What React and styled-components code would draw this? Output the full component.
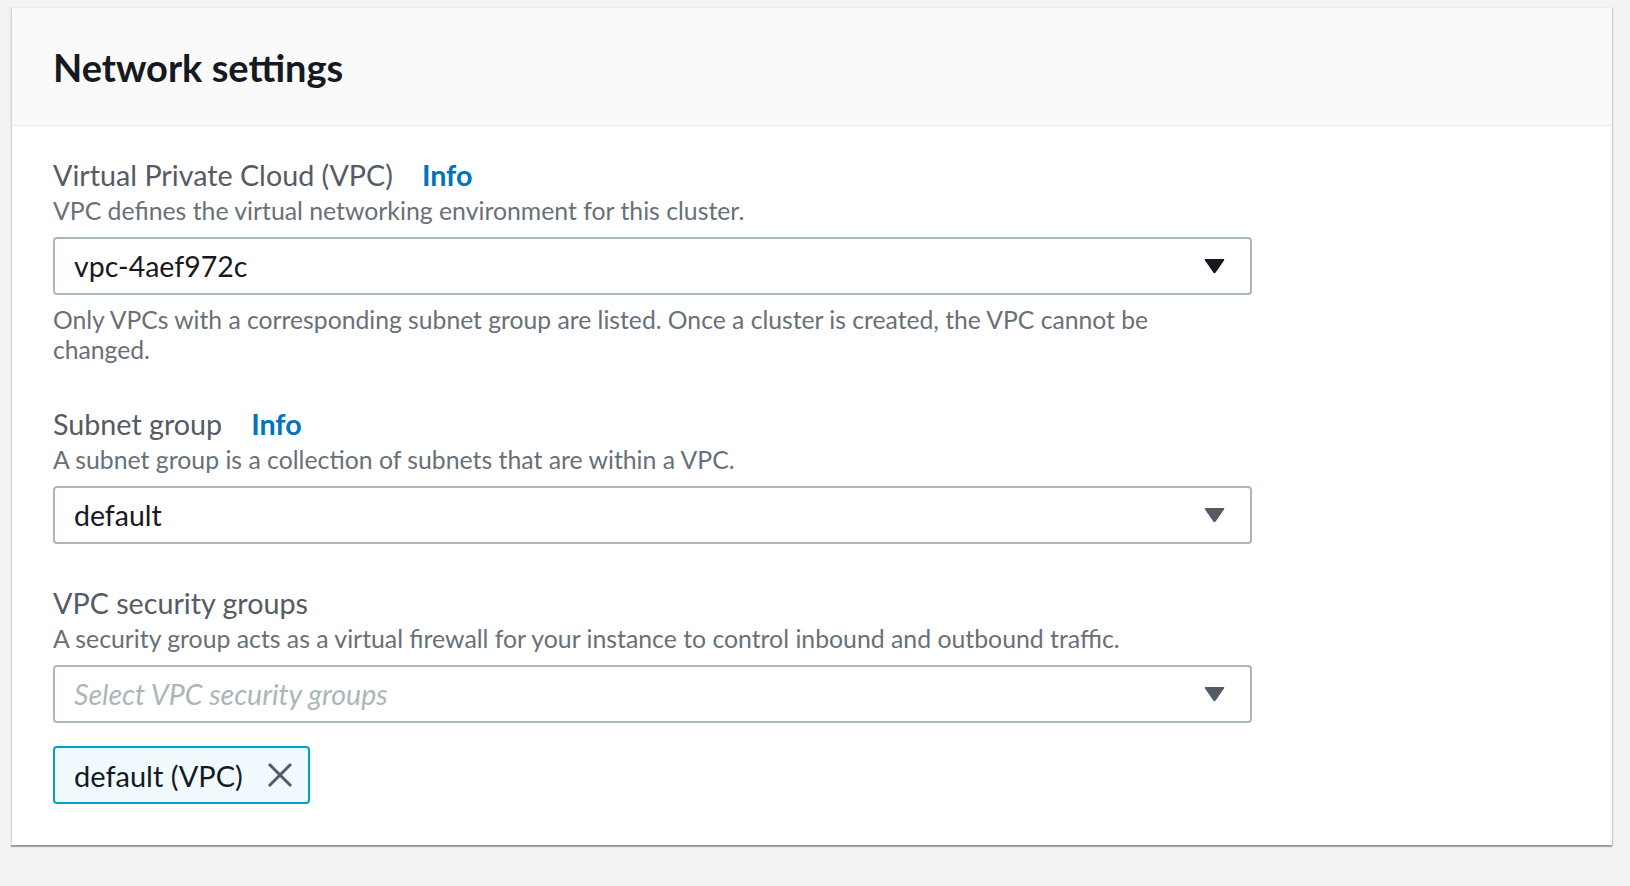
import React from "react";
import styled, { createGlobalStyle } from "styled-components";

const GlobalStyle = createGlobalStyle`
  html, body {
    margin: 0;
    padding: 0;
    background: #f2f3f3;
  }
  body {
    font-family: Lato, "Open Sans", "Noto Sans", sans-serif;
    color: #16191f;
  }
`;

const Page = styled.div`
  padding: 7px 18px 41px 11px;
  min-height: 886px;
  box-sizing: border-box;
`;

const Card = styled.section`
  background: #fff;
  border-top: 1px solid #eaeded;
  border-left: 1px solid #d5dbdb;
  box-shadow: 0 2px 1px 0 rgba(0, 28, 36, 0.3), 1px 1px 1px 0 rgba(0, 28, 36, 0.15);
`;

const Header = styled.header`
  height: 117px;
  background: #fafafa;
  border-bottom: 1px solid #eaeded;
  display: flex;
  align-items: center;
  padding: 0 41px;
`;

const Title = styled.h2`
  margin: 0;
  font-size: 38px;
  font-weight: 700;
  color: #16191f;
`;

const Body = styled.div`
  padding: 32px 41px 41px;
  display: flex;
  flex-direction: column;
  gap: 42px;
`;

const Field = styled.div`
  display: flex;
  flex-direction: column;
`;

const Label = styled.div`
  font-size: 28.7px;
  line-height: 35px;
  color: #545b64;
  display: flex;
  gap: 29px;
`;

const InfoLink = styled.a`
  color: #0073bb;
  font-weight: 700;
  text-decoration: none;
`;

const Description = styled.div`
  font-size: 24.8px;
  line-height: 35px;
  color: #687078;
`;

const Hint = styled.div`
  font-size: 24.7px;
  line-height: 30px;
  color: #687078;
  margin-top: 10px;
  max-width: 1120px;
`;

const Select = styled.div`
  margin-top: 9px;
  width: 1199px;
  height: 58px;
  box-sizing: border-box;
  border: 2px solid #aab7b8;
  border-radius: 4px;
  display: flex;
  align-items: center;
  justify-content: space-between;
  padding: 0 25px 0 19px;
  font-size: 28.5px;
  color: ${(p) => (p.$placeholder ? "#aab7b8" : "#16191f")};
  font-style: ${(p) => (p.$placeholder ? "italic" : "normal")};
`;

const Tokens = styled.div`
  display: flex;
  margin-top: 23px;
`;

const Token = styled.div`
  height: 58px;
  box-sizing: border-box;
  border: 2px solid #00a1c9;
  border-radius: 4px;
  background: #f1faff;
  display: flex;
  align-items: center;
  gap: 24px;
  padding: 0 15px 0 19px;
  font-size: 29px;
  color: #16191f;
`;

const Arrow = ({ color }) => (
  <svg width="21" height="16" viewBox="0 0 21 16">
    <path d="M1.5 1 H19.5 Q21 1 20 2.5 L11.7 14.6 Q10.5 16 9.3 14.6 L1 2.5 Q0 1 1.5 1 Z" fill={color} />
  </svg>
);

const Close = () => (
  <svg width="26" height="26" viewBox="0 0 26 26">
    <path d="M2 2 L24 24 M24 2 L2 24" stroke="#545b64" strokeWidth="3" />
  </svg>
);

export default function App() {
  return (
    <Page>
      <GlobalStyle />
      <Card>
        <Header>
          <Title>Network settings</Title>
        </Header>
        <Body>
          <Field>
            <Label>
              <span>Virtual Private Cloud (VPC)</span>
              <InfoLink href="#">Info</InfoLink>
            </Label>
            <Description>VPC defines the virtual networking environment for this cluster.</Description>
            <Select>
              <span>vpc-4aef972c</span>
              <Arrow color="#16191f" />
            </Select>
            <Hint>
              Only VPCs with a corresponding subnet group are listed. Once a cluster is created, the VPC cannot be
              changed.
            </Hint>
          </Field>
          <Field>
            <Label>
              <span>Subnet group</span>
              <InfoLink href="#">Info</InfoLink>
            </Label>
            <Description>A subnet group is a collection of subnets that are within a VPC.</Description>
            <Select>
              <span>default</span>
              <Arrow color="#545b64" />
            </Select>
          </Field>
          <Field>
            <Label>
              <span>VPC security groups</span>
            </Label>
            <Description>
              A security group acts as a virtual firewall for your instance to control inbound and outbound traffic.
            </Description>
            <Select $placeholder>
              <span>Select VPC security groups</span>
              <Arrow color="#545b64" />
            </Select>
            <Tokens>
              <Token>
                <span>default (VPC)</span>
                <Close />
              </Token>
            </Tokens>
          </Field>
        </Body>
      </Card>
    </Page>
  );
}
